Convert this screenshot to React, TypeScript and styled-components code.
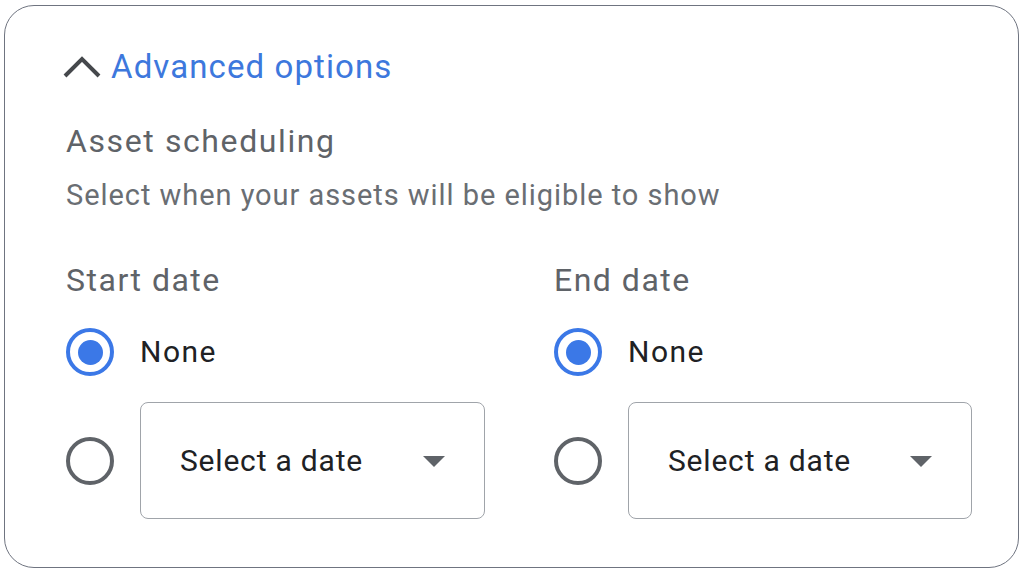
import React from 'react'
import styled, { createGlobalStyle } from 'styled-components'

const GlobalStyle = createGlobalStyle`
    html, body {
        margin: 0;
        padding: 0;
        background: #ffffff;
        font-family: Roboto, "Noto Sans", Arial, sans-serif;
    }
`;

const Card = styled.div`
    box-sizing: border-box;
    width: 1015px;
    height: 563px;
    margin: 5px 0 0 4px;
    padding: 41px 0 0 61px;
    border: 1.5px solid #6f7480;
    border-radius: 30px;
`;

const Header = styled.div`
    display: flex;
    align-items: center;
    gap: 9px;
    height: 40px;
    margin-left: -4px;
`;

const HeaderText = styled.span`
    font-size: 33px;
    line-height: 40px;
    color: #3d78dd;
    letter-spacing: 1.1px;
`;

const Title = styled.div`
    margin-top: 36px;
    font-size: 32px;
    line-height: 36px;
    color: #5f6368;
    letter-spacing: 1.6px;
`;

const Subtitle = styled.div`
    margin-top: 21px;
    font-size: 29px;
    line-height: 30px;
    color: #6a6e73;
    letter-spacing: 0.95px;
`;

const Columns = styled.div`
    display: grid;
    grid-template-columns: 419px 418px;
    column-gap: 69px;
    margin-top: 52px;
`;

const Column = styled.div`
    display: flex;
    flex-direction: column;
`;

const Label = styled.div`
    font-size: 32px;
    line-height: 36px;
    color: #5f6368;
    letter-spacing: 1.5px;
`;

const OptionRow = styled.div<{ $top: number }>`
    display: flex;
    align-items: center;
    gap: 26px;
    margin-top: ${p => p.$top}px;
`;

const Radio = styled.span<{ $checked?: boolean }>`
    box-sizing: border-box;
    flex: 0 0 48px;
    width: 48px;
    height: 48px;
    border-radius: 50%;
    border: 4px solid ${p => (p.$checked ? '#3b78e7' : '#5f6368')};
    display: flex;
    align-items: center;
    justify-content: center;

    &::after {
        content: '';
        display: ${p => (p.$checked ? 'block' : 'none')};
        width: 25px;
        height: 25px;
        border-radius: 50%;
        background: #3b78e7;
    }
`;

const OptionText = styled.span`
    font-size: 30px;
    line-height: 36px;
    color: #202124;
    letter-spacing: 1.5px;
`;

const SelectBox = styled.div`
    box-sizing: border-box;
    flex: 1;
    height: 117px;
    display: flex;
    align-items: center;
    justify-content: space-between;
    padding: 0 39px 0 39px;
    border: 1.5px solid #a0a4aa;
    border-radius: 8px;
    font-size: 30px;
    color: #202124;
    letter-spacing: 0.8px;
`;

const Caret = styled.span`
    width: 0;
    height: 0;
    border-left: 11px solid transparent;
    border-right: 11px solid transparent;
    border-top: 11px solid #5f6368;
    margin-top: 2px;
`;

const Chevron = () => (
    <svg width="40" height="24" viewBox="0 0 40 24">
        <path d="M3 21 L20 4 L37 21" fill="none" stroke="#45484c" strokeWidth="4" />
    </svg>
);

const dateFields = [
    { key: 'start', label: 'Start date' },
    { key: 'end', label: 'End date' },
];

const App = () => {
    return (
        <>
            <GlobalStyle />
            <Card>
                <Header>
                    <Chevron />
                    <HeaderText>Advanced options</HeaderText>
                </Header>
                <Title>Asset scheduling</Title>
                <Subtitle>Select when your assets will be eligible to show</Subtitle>
                <Columns>
                    {dateFields.map(field => (
                        <Column key={field.key}>
                            <Label>{field.label}</Label>
                            <OptionRow $top={30}>
                                <Radio $checked />
                                <OptionText>None</OptionText>
                            </OptionRow>
                            <OptionRow $top={26}>
                                <Radio />
                                <SelectBox>
                                    <span>Select a date</span>
                                    <Caret />
                                </SelectBox>
                            </OptionRow>
                        </Column>
                    ))}
                </Columns>
            </Card>
        </>
    );
}

export default App;
